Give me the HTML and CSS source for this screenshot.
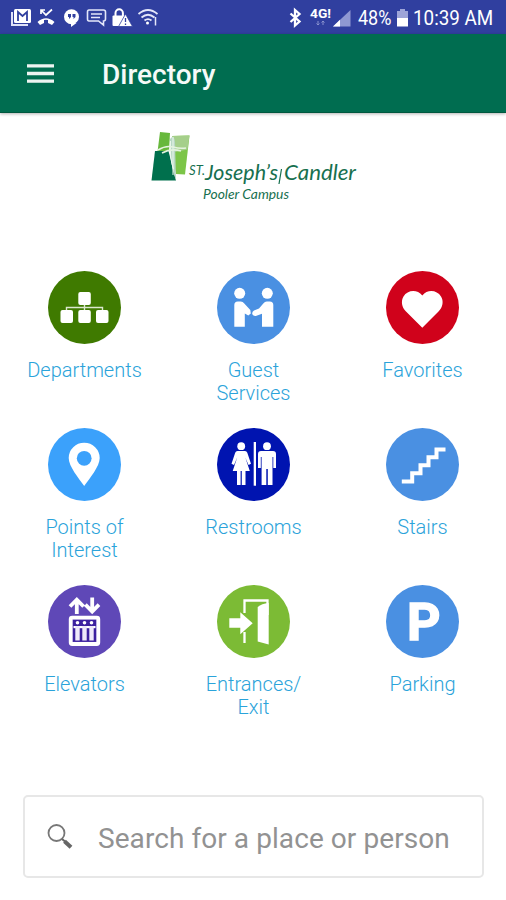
FILE: index.html
```html
<!DOCTYPE html>
<html lang="en">
<head>
    <meta charset="UTF-8">
    <meta name="viewport" content="width=device-width, initial-scale=1.0">
    <title>Directory</title>

    <link rel="stylesheet" href="styles.css">
</head>
<body>

    <div class="status">
        <svg class="notifications" width="160" height="34" viewBox="0 0 160 34">
            <!-- mail -->
            <path d="M12 12v13h16" fill="none" stroke="#dfe2f8" stroke-width="2"/>
            <rect x="14" y="9" width="17" height="14" rx="1.5" fill="#fff"/>
            <path d="M18 21v-9l4.500 4 4.500-4v9" fill="none" stroke="#303f9f" stroke-width="1.800"/>
            <!-- missed call -->
            <path d="M41 10l5 5 6-5.500M41 14v-4h4" fill="none" stroke="#fff" stroke-width="1.700"/>
            <path d="M37.500 22q8.500-7.500 17 0l-2.500 3-4-2v-3q-2-.7-4 0v3l-4 2z" fill="#fff"/>
            <!-- hangouts -->
            <circle cx="71.500" cy="16.700" r="7.500" fill="#fff"/>
            <path d="M71 23h5.500l-5.500 4z" fill="#fff"/>
            <path d="M68 14h3v3l-2 2v-2h-1zM72.500 14h3v3l-2 2v-2h-1z" fill="#303f9f"/>
            <!-- message -->
            <path d="M89 10h14.500q2 0 2 2v7q0 2-2 2v4l-5-4H89q-1.500 0-1.500-2v-7q0-2 1.500-2z" fill="none" stroke="#e4e7fa" stroke-width="1.600"/>
            <path d="M91 14h11M91 17.500h9" stroke="#e4e7fa" stroke-width="1.500"/>
            <!-- lock with warning -->
            <path d="M115.500 16v-3a3.700 3.700 0 0 1 7.400 0v3" fill="none" stroke="#fff" stroke-width="2"/>
            <rect x="112.500" y="15.500" width="13" height="10.500" rx="1" fill="#fff"/>
            <path d="M125.500 14l7 12.500h-14z" fill="#fff" stroke="#303f9f" stroke-width=".8"/>
            <path d="M125.500 18v4M125.500 23.500v1.500" stroke="#303f9f" stroke-width="1.300"/>
            <!-- wifi -->
            <g fill="none" stroke="#e4e7fa" stroke-width="1.800">
                <path d="M138.500 14q9.500-8 19 0M141.500 17.500q6.500-5.500 13 0M144.500 20.500q3.500-2.800 7 0"/>
                <path d="M155.500 17v8.500" stroke-width="1.500"/>
            </g>
            <circle cx="147.500" cy="23" r="1.500" fill="#fff"/>
        </svg>
        <svg class="signals" width="64" height="34" viewBox="0 0 64 34">
            <!-- bluetooth -->
            <path d="M1.500 13.500l9 8-4.500 4V10l4.500 4-9 8" fill="none" stroke="#fff" stroke-width="2.300"/>
            <text class="network" x="21" y="18" textLength="21" lengthAdjust="spacingAndGlyphs">4G!</text>
            <path d="M29 21v4M27.500 23.500l1.500 1.500 1.500-1.500M34 25v-4M32.500 22.500l1.500-1.500 1.500 1.500" fill="none" stroke="#8992ce" stroke-width="1"/>
            <path d="M44 26.500L61.500 10v16.500z" fill="#8f98d2"/>
            <path d="M44 26.500l7-6.700v6.700z" fill="#fff"/>
        </svg>
        <span class="percent">48%</span>
        <svg class="battery" width="13" height="34" viewBox="0 0 13 34">
            <path d="M4 9h5v2h3v8H1v-8h3z" fill="#9da4d8"/>
            <path d="M1 18h11v8.500H1z" fill="#fff"/>
        </svg>
        <span class="clock">10:39 AM</span>
    </div>

    <header>
        <svg class="menu" width="28" height="20" viewBox="0 0 28 20">
            <path d="M0 1.900h27M0 9.500h27M0 17.100h27" stroke="#edf4f1" stroke-width="3.400"/>
        </svg>
        <h1>Directory</h1>
    </header>

    <main>
        <svg class="logo" width="230" height="80" viewBox="140 125 230 80">
            <path d="M160 132l10 1-1 18-11.500 1z" fill="#67b83c"/>
            <path d="M172 136l17.500-.5-4.500 39-9-.5-4-20z" fill="#7cc548"/>
            <path d="M172 136l17.500-.5-2 14-15 3z" fill="#a5cf8a"/>
            <path d="M155 151h13.500l7.500 29.500h-24.500z" fill="#00704d"/>
            <path d="M170 139q4-5 5 3l1 38q-6-14-6-41z" fill="#b9d8c5"/>
            <path d="M173 137v38M170.500 141q-1 18 3 28" fill="none" stroke="#edf8ee" stroke-width="1"/>
            <path d="M158 150q8-5 15-3 7 2 13 1M162 153q9-5 19-2" fill="none" stroke="#e5f3df" stroke-width="1.500"/>
            <g class="logo-text">
                <text x="189" y="175" font-size="13" textLength="16" lengthAdjust="spacingAndGlyphs">ST.</text>
                <text x="205" y="180" font-size="21" textLength="73" lengthAdjust="spacingAndGlyphs">Joseph’s</text>
                <text x="284" y="180" font-size="21" textLength="72" lengthAdjust="spacingAndGlyphs">Candler</text>
                <text x="203" y="199" font-size="13" textLength="86" lengthAdjust="spacingAndGlyphs">Pooler Campus</text>
            </g>
            <path d="M281.500 169l-2.500 15" stroke="#17704f" stroke-width="1.200"/>
        </svg>

        <div class="places">
            <div class="place">
                <svg class="icon" viewBox="0 0 73 73">
                    <circle cx="36.500" cy="36.500" r="36.500" fill="#3f7a00"/>
                    <path d="M18.500 40v-3.500h36V40M36.500 33v7" fill="none" stroke="#dce8cf" stroke-width="1.400"/>
                    <g fill="#fff">
                        <rect x="30.300" y="21" width="12.500" height="13" rx="2"/>
                        <rect x="12.500" y="39" width="12.500" height="13" rx="2"/>
                        <rect x="30.300" y="39" width="12.500" height="13" rx="2"/>
                        <rect x="48" y="39" width="12.500" height="13" rx="2"/>
                    </g>
                </svg>
                <p>Departments</p>
            </div>
            <div class="place">
                <svg class="icon" viewBox="0 0 73 73">
                    <circle cx="36.500" cy="36.500" r="36.500" fill="#4a90e2"/>
                    <g fill="#fff">
                        <circle cx="22.700" cy="22.300" r="5.500"/>
                        <circle cx="50.300" cy="22.300" r="5.500"/>
                        <path d="M17.300 55.700V34q0-3.500 3.500-3.500h3q2 0 3.500 2l6 6.500 .5 3.500-2.500 2-3.500-2v13.200z"/>
                        <path d="M56.300 55.700V34q0-3.500-3.500-3.500h-3q-2 0-3.500 2L42 37.500l-5 2q-2.500 1.500-1.500 4 1 2 4 1.300l5.500-2v12.900z"/>
                    </g>
                </svg>
                <p>Guest<br>Services</p>
            </div>
            <div class="place">
                <svg class="icon" viewBox="0 0 73 73">
                    <circle cx="36.500" cy="36.500" r="36.500" fill="#d0021b"/>
                    <path d="M36.300 56.700L20 40.500C15.500 36 14.800 30 17.500 25.500 21.500 19 31 18 36.300 24.500 41.500 18 51 19 55 25.500c2.800 4.500 2 10.500-2.500 15z" fill="#fff"/>
                </svg>
                <p>Favorites</p>
            </div>
            <div class="place">
                <svg class="icon" viewBox="0 0 73 73">
                    <circle cx="36.500" cy="36.500" r="36.500" fill="#3ba1fb"/>
                    <path d="M36.200 58C31 50.500 20.700 38.500 20.700 30a15.500 15.300 0 0 1 31 0C51.700 38.500 41.500 50.500 36.200 58z" fill="#fff"/>
                    <circle cx="36.200" cy="30.300" r="7.400" fill="#3ba1fb"/>
                </svg>
                <p>Points of<br>Interest</p>
            </div>
            <div class="place">
                <svg class="icon" viewBox="0 0 73 73">
                    <circle cx="36.500" cy="36.500" r="36.500" fill="#0014b0"/>
                    <g fill="#fff">
                        <circle cx="24.200" cy="18.200" r="3.900"/>
                        <path d="M20.500 23h7.500q1.700 0 2.300 1.700l3.700 11-2.500 1.300-3.200-7.500 4.500 13.500h-4.300V57h-3.700V43h-1.200v14H20V43h-4.300l4.500-13.500L17 37l-2.500-1.300 3.700-11q.6-1.700 2.300-1.700z"/>
                        <path d="M36.700 14h2.300v43.700h-2.300z"/>
                        <circle cx="50" cy="18.200" r="3.900"/>
                        <path d="M44 23h12q3 0 3 3v14h-2.700V29h-.8v28h-4.700V41h-1.500v16h-4.700V29h-.8v11H41V26q0-3 3-3z"/>
                    </g>
                </svg>
                <p>Restrooms</p>
            </div>
            <div class="place">
                <svg class="icon" viewBox="0 0 73 73">
                    <circle cx="36.500" cy="36.500" r="36.500" fill="#4a90e2"/>
                    <path d="M15.800 53.500h10.400v-8.300h8.300v-8h8v-8h8v-7.800h9" fill="none" stroke="#fff" stroke-width="4"/>
                </svg>
                <p>Stairs</p>
            </div>
            <div class="place">
                <svg class="icon" viewBox="0 0 73 73">
                    <circle cx="36.500" cy="36.500" r="36.500" fill="#5f48b7"/>
                    <g fill="none" stroke="#fff" stroke-width="3.800">
                        <path d="M28.800 29V15M22 21.500l6.800-6.800 6.800 6.800M44.200 12.500v13.500M37.400 19.700l6.800 6.800 6.800-6.800"/>
                        <rect x="22.700" y="32.700" width="27.600" height="26.300" rx="1.500"/>
                    </g>
                    <rect x="25" y="35" width="23" height="21.700" fill="#3c219f"/>
                    <g fill="#fff">
                        <circle cx="29.500" cy="37.800" r="1.800"/>
                        <circle cx="36.500" cy="37.800" r="1.800"/>
                        <circle cx="43.500" cy="37.800" r="1.800"/>
                        <path d="M25.500 41h22v2.200h-22z"/>
                        <path d="M27.300 41h4.400v14.500h-4.400zM34.300 41h4.400v14.500h-4.400zM41.300 41h4.400v14.500h-4.400z" fill="#eee9fa"/>
                    </g>
                </svg>
                <p>Elevators</p>
            </div>
            <div class="place">
                <svg class="icon" viewBox="0 0 73 73">
                    <circle cx="36.500" cy="36.500" r="36.500" fill="#7cbb35"/>
                    <path d="M27.500 28V15.500h23V30M27.500 47v11" fill="none" stroke="#fff" stroke-width="2.300"/>
                    <path d="M40.700 22q4-3.500 11-4V59.500l-11-3z" fill="#fff"/>
                    <path d="M12.300 33.300h11v-6L35.700 38.300 23.300 49.300v-6.600h-11z" fill="#fff"/>
                </svg>
                <p>Entrances/<br>Exit</p>
            </div>
            <div class="place">
                <svg class="icon" viewBox="0 0 73 73">
                    <circle cx="36.500" cy="36.500" r="36.500" fill="#4a90e2"/>
                    <text class="letter" x="21" y="55">P</text>
                </svg>
                <p>Parking</p>
            </div>
        </div>

        <div class="search">
            <svg width="28" height="28" viewBox="0 0 28 28">
                <circle cx="10.500" cy="10" r="8" fill="none" stroke="#777" stroke-width="1.800"/>
                <path d="M16 16l3 2.500" stroke="#666" stroke-width="2"/>
                <path d="M18.500 18.200l6.500 6" stroke="#666" stroke-width="4"/>
            </svg>
            <input type="text" placeholder="Search for a place or person">
        </div>
    </main>

</body>
</html>
```

FILE: styles.css
```css
* {
    margin: 0;
    padding: 0;
    box-sizing: border-box;
}

body {
    background-color: white;
    font-family: Roboto, sans-serif;
    overflow: hidden;
}

svg {
    display: block;
    flex: none;
}

.status {
    display: flex;
    align-items: center;
    height: 34px;
    background-color: #303f9f;
    color: white;
    font-size: 20px;
    line-height: 36px;
    white-space: nowrap;
}

.signals {
    margin-left: 129px;
}

.network {
    font: bold 12px Roboto, sans-serif;
    fill: white;
}

.percent {
    width: 34px;
    margin: 2px 0 0 5px;
    transform: scaleX(0.9);
    transform-origin: left;
}

.battery {
    margin-left: 4px;
}

.clock {
    margin: 2px 0 0 4px;
    transform: scaleX(0.94);
    transform-origin: left;
}

header {
    display: flex;
    align-items: center;
    height: 79px;
    padding-left: 27px;
    background-color: #006d50;
    border-bottom: 1px solid #00583f;
    box-shadow: 0 1px 3px rgba(0, 0, 0, 0.3);
}

.menu {
    margin-top: 1px;
}

h1 {
    margin: 3px 0 0 47px;
    color: #f5faf8;
    font-size: 28px;
    font-weight: 500;
}

.logo {
    margin: 12px 0 0 140px;
}

.logo-text {
    font-family: Lato, sans-serif;
    font-style: italic;
    fill: #17704f;
}

.places {
    display: grid;
    grid-template-columns: repeat(3, 1fr);
    grid-auto-rows: 157px;
    margin: 66px -1px 0 0;
}

.place {
    display: flex;
    flex-direction: column;
    align-items: center;
    text-align: center;
}

.icon {
    width: 73px;
    height: 73px;
}

.letter {
    font: bold 52px Roboto, sans-serif;
    fill: white;
    stroke: white;
    stroke-width: 1.5px;
}

.place p {
    margin-top: 15px;
    color: #2ba3da;
    font-size: 20px;
    font-weight: 300;
    line-height: 23px;
}

.search {
    display: flex;
    align-items: center;
    height: 83px;
    margin: 53px 22px 0 23px;
    padding-left: 21px;
    border: 2px solid #e7e7e7;
    border-radius: 5px;
}

.search input {
    flex: 1;
    min-width: 0;
    margin-left: 24px;
    padding-top: 4px;
    border: none;
    outline: none;
    background: none;
    font: 28px Roboto, sans-serif;
    letter-spacing: 0.07px;
}

.search input::placeholder {
    color: #929292;
}
```
